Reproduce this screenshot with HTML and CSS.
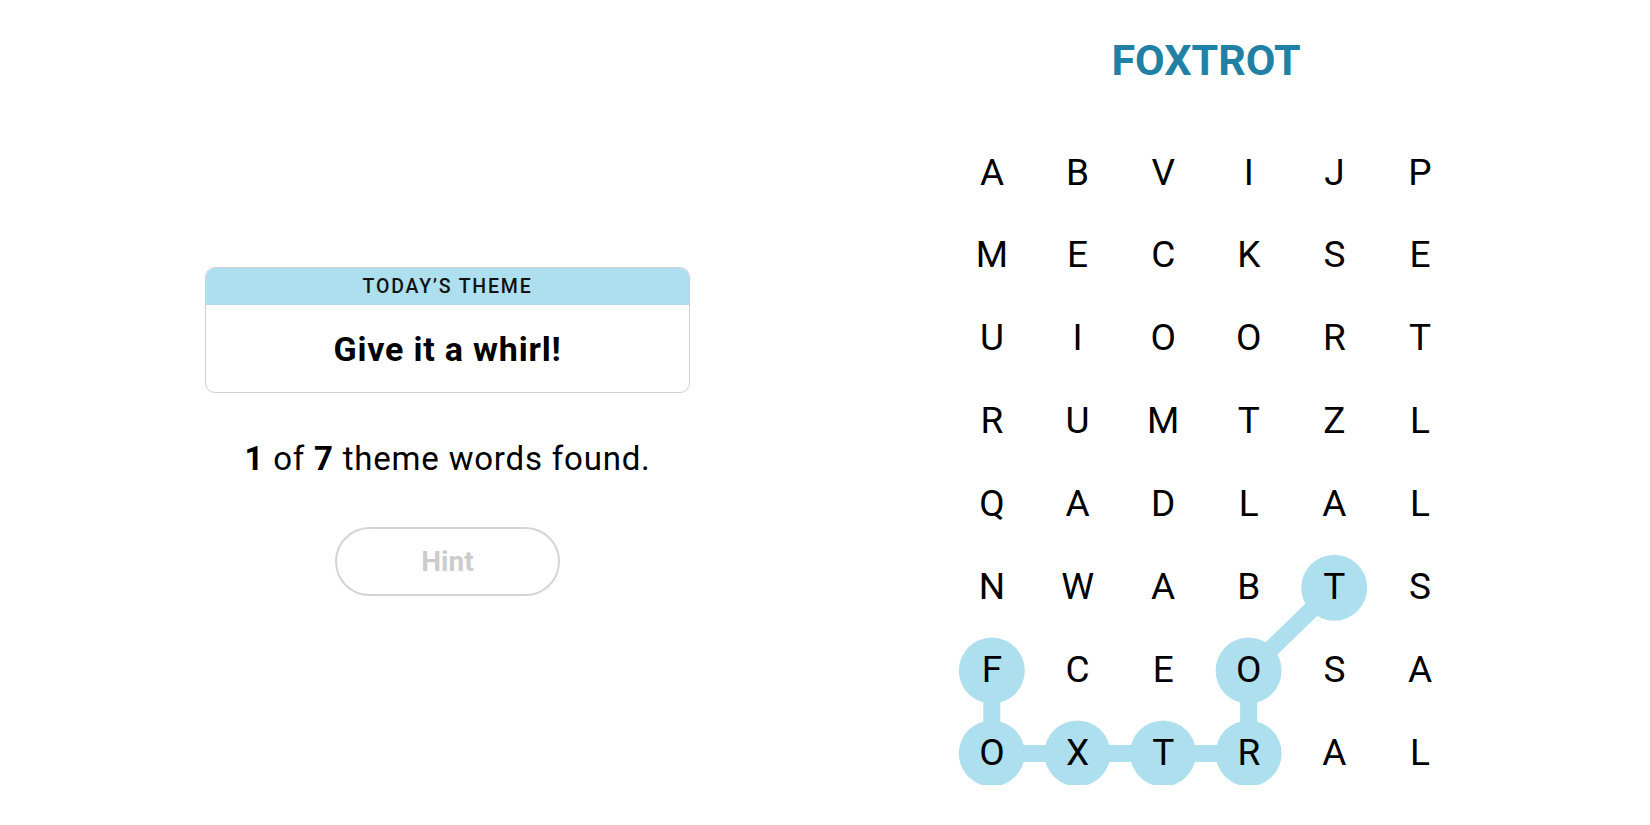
FILE: index.html
```html
<!DOCTYPE html>
<html lang="en">
<head>
<meta charset="utf-8">
<title>Strands</title>
<link rel="stylesheet" href="styles.css">
</head>
<body>
<div class="page">
  <section class="left">
    <div class="theme-card">
      <div class="theme-head">TODAY’S THEME</div>
      <div class="theme-body">Give it a whirl!</div>
    </div>
    <p class="progress"><b>1</b> of <b>7</b> theme words found.</p>
    <button class="hint" type="button">Hint</button>
  </section>
  <section class="right">
    <h1 class="word">FOXTROT</h1>
    <div class="board">
      <svg class="trail" width="514" height="663" viewBox="0 0 514 663">
        <path d="M42.8 538.59 L42.8 621.45 L299.6 621.45 L299.6 538.59 L385.2 455.73" fill="none" stroke="#aedfee" stroke-width="17" stroke-linejoin="round"/>
        <circle cx="42.8" cy="538.59" r="33" fill="#aedfee"/>
        <circle cx="42.8" cy="621.45" r="33" fill="#aedfee"/>
        <circle cx="128.4" cy="621.45" r="33" fill="#aedfee"/>
        <circle cx="214" cy="621.45" r="33" fill="#aedfee"/>
        <circle cx="299.6" cy="621.45" r="33" fill="#aedfee"/>
        <circle cx="299.6" cy="538.59" r="33" fill="#aedfee"/>
        <circle cx="385.2" cy="455.73" r="33" fill="#aedfee"/>
      </svg>
      <div class="grid">
        <span>A</span><span>B</span><span>V</span><span>I</span><span>J</span><span>P</span>
        <span>M</span><span>E</span><span>C</span><span>K</span><span>S</span><span>E</span>
        <span>U</span><span>I</span><span>O</span><span>O</span><span>R</span><span>T</span>
        <span>R</span><span>U</span><span>M</span><span>T</span><span>Z</span><span>L</span>
        <span>Q</span><span>A</span><span>D</span><span>L</span><span>A</span><span>L</span>
        <span>N</span><span>W</span><span>A</span><span>B</span><span>T</span><span>S</span>
        <span>F</span><span>C</span><span>E</span><span>O</span><span>S</span><span>A</span>
        <span>O</span><span>X</span><span>T</span><span>R</span><span>A</span><span>L</span>
      </div>
    </div>
  </section>
</div>
</body>
</html>
```

FILE: styles.css
```css
html, body {
  margin: 0;
  padding: 0;
  background: #ffffff;
}

body {
  font-family: "Roboto", "Liberation Sans", sans-serif;
  color: #000000;
  width: 1650px;
  height: 825px;
  overflow: hidden;
}

.page {
  display: flex;
  flex-direction: row;
  align-items: flex-start;
}

.left {
  width: 895px;
  display: flex;
  flex-direction: column;
  align-items: center;
  padding-top: 267px;
}

.theme-card {
  width: 485px;
  box-sizing: border-box;
  border: 1px solid #cfcfcf;
  border-radius: 10px;
  overflow: hidden;
}

.theme-head {
  height: 37px;
  background: #aedfee;
  display: flex;
  align-items: center;
  justify-content: center;
  font-size: 19.5px;
  font-weight: 500;
  letter-spacing: 1.8px;
  color: #121212;
}

.theme-body {
  height: 87px;
  display: flex;
  align-items: center;
  justify-content: center;
  font-size: 34px;
  font-weight: 700;
  letter-spacing: 0.8px;
  color: #000000;
}

.progress {
  margin: 46px 0 0 0;
  font-size: 33px;
  line-height: 40px;
  font-weight: 400;
  letter-spacing: 0.8px;
  color: #000000;
}

.progress b {
  font-weight: 700;
}

.hint {
  margin-top: 48px;
  width: 225px;
  height: 69px;
  box-sizing: border-box;
  border: 2px solid #d4d4d4;
  border-radius: 35px;
  background: #ffffff;
  font-family: "Roboto", "Liberation Sans", sans-serif;
  font-size: 28px;
  font-weight: 700;
  color: #cccccc;
  padding: 0;
}

.right {
  width: 622px;
  display: flex;
  flex-direction: column;
  align-items: center;
  padding-top: 35px;
}

.word {
  margin: 0;
  height: 50px;
  font-size: 43px;
  line-height: 50px;
  font-weight: 700;
  color: #2081a5;
}

.board {
  position: relative;
  margin-top: 46.6px;
  width: 513.6px;
  height: 653px;
  overflow: hidden;
}

.trail {
  position: absolute;
  left: 0;
  top: 0;
}

.grid {
  position: relative;
  display: grid;
  grid-template-columns: repeat(6, 85.6px);
  grid-template-rows: repeat(8, 82.86px);
}

.grid span {
  display: flex;
  align-items: center;
  justify-content: center;
  font-size: 37px;
  line-height: 82.86px;
  font-weight: 400;
  color: #000000;
}
```
